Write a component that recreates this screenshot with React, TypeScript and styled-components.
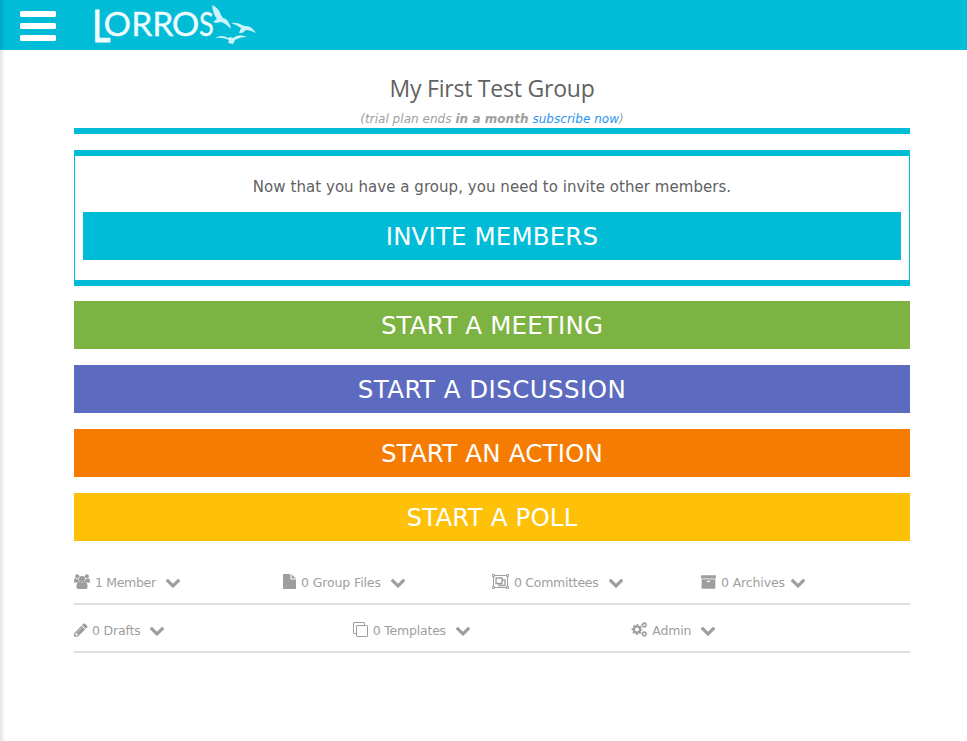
import React from "react";
import styled, { createGlobalStyle } from "styled-components";

const CYAN = "#00bcd7";

const GlobalStyle = createGlobalStyle`
  *, *::before, *::after { box-sizing: border-box; }
  html, body { margin: 0; padding: 0; background: #fff; overflow: hidden; }
  body { font-family: Verdana, "DejaVu Sans", sans-serif; color: #616161; }
`;

const Page = styled.div`
  position: relative;
  width: 967px;
  height: 741px;
  overflow: hidden;
`;

const EdgeShadow = styled.div`
  position: absolute;
  inset: 0 auto 0 0;
  width: 5px;
  background: linear-gradient(to right, rgba(0, 0, 0, 0.11), rgba(0, 0, 0, 0));
`;

const TopBar = styled.header`
  display: flex;
  align-items: flex-start;
  height: 50px;
  padding-left: 20px;
  background: ${CYAN};
`;

const MenuButton = styled.button`
  display: flex;
  flex-direction: column;
  gap: 6px;
  width: 36px;
  margin: 11px 34px 0 0;
  padding: 0;
  border: 0;
  background: none;
`;

const MenuBar = styled.span`
  height: 6px;
  border-radius: 1.5px;
  background: #fff;
`;

const Main = styled.main`
  width: 836px;
  margin-left: 74px;
`;

const Heading = styled.div`
  height: 84px;
  padding-top: 22px;
  border-bottom: 6px solid ${CYAN};
  text-align: center;
`;

const Title = styled.h1`
  margin: 0;
  font: 400 23px/32px "Segoe UI", "Open Sans", sans-serif;
  letter-spacing: -0.22px;
`;

const PlanNote = styled.p`
  margin: 7px 0 0;
  font-size: 12px;
  line-height: 16px;
  font-style: italic;
  letter-spacing: 0.04px;
  color: #9e9e9e;
`;

const PlanLink = styled.a`
  color: #2a93f0;
`;

const InvitePanel = styled.section`
  height: 136px;
  margin: 16px 0 15px;
  padding: 21px 8px 0;
  border: solid ${CYAN};
  border-width: 6px 1px;
  text-align: center;
`;

const InviteText = styled.p`
  margin: 0 0 14px;
  font-size: 15px;
  line-height: 21px;
  letter-spacing: 0.05px;
`;

const ActionButton = styled.button<{ $color: string; $spacing: number }>`
  display: block;
  width: 100%;
  height: 48px;
  padding: 0;
  border: 0;
  background: ${(p) => p.$color};
  color: #fff;
  font: 400 24.5px/48px Verdana, "DejaVu Sans", sans-serif;
  letter-spacing: ${(p) => p.$spacing}px;
`;

const ActionLabel = styled.span`
  display: block;
  padding-top: 1px;
  line-height: 47px;
`;

const ActionList = styled.div`
  display: grid;
  gap: 16px;
`;

const SectionRow = styled.nav<{ $columns: number }>`
  display: grid;
  grid-template-columns: repeat(${(p) => p.$columns}, 1fr);
  height: 48px;
  padding-top: 13px;
  border-bottom: 2px solid #e0e0e0;
`;

const Sections = styled.div`
  margin-top: 16px;
`;

const SectionLink = styled.a`
  display: flex;
  align-items: center;
  height: 24px;
  font-size: 12.5px;
  color: #9e9e9e;
`;

const IconSlot = styled.span<{ $width: number }>`
  display: flex;
  flex: none;
  width: ${(p) => p.$width}px;
  height: 16px;
`;

const ChevronSlot = styled.span`
  display: flex;
  padding-bottom: 1px;
`;

const SectionLabel = styled.span<{ $width: number; $spacing: number }>`
  flex: none;
  width: ${(p) => p.$width}px;
  padding-top: 2px;
  white-space: nowrap;
  line-height: 24px;
  letter-spacing: ${(p) => p.$spacing}px;
`;

const Glyph = ({ d, left = 0 }: { d: string; left?: number }) => (
  <svg width="16" height="16" viewBox={`${left} 0 1792 1792`} fill="#9e9e9e">
    <path d={d} />
  </svg>
);

const CHEVRON =
  "M1683 808l-742 741q-19 19-45 19t-45-19l-742-741q-19-19-19-45.5t19-45.5l166-165q19-19 45-19t45 19l531 531 531-531q19-19 45-19t45 19l166 165q19 19 19 45.5t-19 45.5z";
const PENCIL =
  "M491 1536l91-91-235-235-91 91v107h128v128h107zm523-928q0-22-22-22-10 0-17 7l-542 542q-7 7-7 17 0 22 22 22 10 0 17-7l542-542q7-7 7-17zm-54-192l416 416-832 832h-416v-416zm683 96q0 53-37 90l-166 166-416-416 166-165q36-38 90-38 53 0 91 38l235 234q37 39 37 91z";
const ARCHIVE =
  "M1088 832q0-26-19-45t-45-19h-256q-26 0-45 19t-19 45 19 45 45 19h256q26 0 45-19t19-45zm576-192v960q0 26-19 45t-45 19h-1408q-26 0-45-19t-19-45v-960q0-26 19-45t45-19h1408q26 0 45 19t19 45zm64-448v256q0 26-19 45t-45 19h-1536q-26 0-45-19t-19-45v-256q0-26 19-45t45-19h1536q26 0 45 19t19 45z";

const UsersIcon = () => (
  <svg width="16" height="16" viewBox="0 0 16 16" fill="#9e9e9e">
    <circle cx="3.2" cy="2.3" r="2.1" />
    <circle cx="12.8" cy="2.3" r="2.1" />
    <circle cx="8" cy="5" r="3.1" />
    <path d="M1.6 4.3Q3.2 5.5 4.5 4.7Q4.3 6.7 5.5 8H4Q3 8 2.4 8.8H1.5Q0 8.8 0 7.5Q0 4.3 1.6 4.3Z" />
    <path d="M14.4 4.3Q12.8 5.5 11.5 4.7Q11.7 6.7 10.5 8H12Q13 8 13.6 8.8H14.5Q16 8.8 16 7.5Q16 4.3 14.4 4.3Z" />
    <path d="M5.2 7.6Q8 9.2 10.8 7.6Q13.6 8.2 13.6 13Q13.6 15 11.8 15H4.2Q2.4 15 2.4 13Q2.4 8.2 5.2 7.6Z" />
  </svg>
);

const FileIcon = () => (
  <svg width="13" height="16" viewBox="0 0 13 16" fill="#9e9e9e">
    <path d="M.7 0H7.4V4.7Q7.4 5.5 8.2 5.5H13V14.2Q13 15 12.3 15H.7Q0 15 0 14.2V.7Q0 0 .7 0Z" />
    <path d="M8.5.2L12.8 4.5H8.5Z" />
  </svg>
);

const ObjectGroupIcon = () => (
  <svg width="18" height="16" viewBox="0 0 18 16" fill="none" stroke="#9e9e9e">
    <path d="M3 1.5H15M3 13.5H15M1.5 3V12M15.5 3V12" />
    <path d="M.5.5H2.5V2.5H.5ZM14.5.5H16.5V2.5H14.5ZM.5 12.5H2.5V14.5H.5ZM14.5 12.5H16.5V14.5H14.5Z" />
    <path strokeWidth="1.3" d="M4 4H10V9.5H4ZM10 6H13V11.5H7V9.5" />
  </svg>
);

const CloneIcon = () => (
  <svg width="16" height="16" viewBox="0 0 16 16" fill="none" stroke="#9e9e9e">
    <path d="M3.5 11.5H1Q.5 11.5.5 11V1Q.5.5 1 .5H11Q11.5.5 11.5 1V3.5" />
    <rect x="3.5" y="3.5" width="11" height="11" rx=".6" />
  </svg>
);

const CogsIcon = () => (
  <svg width="17" height="16" viewBox="0 0 17 16" fill="none" stroke="#9e9e9e">
    <circle cx="6" cy="7.5" r="3.2" strokeWidth="2.3" />
    <circle cx="6" cy="7.5" r="4.7" strokeWidth="1.4" strokeDasharray="2 1.69" strokeDashoffset="1" />
    <circle cx="13.3" cy="3" r="1.7" strokeWidth="1.4" />
    <circle cx="13.3" cy="3" r="2.6" strokeWidth="1" strokeDasharray="1.3 1.42" strokeDashoffset=".65" />
    <circle cx="13.3" cy="12" r="1.7" strokeWidth="1.4" />
    <circle cx="13.3" cy="12" r="2.6" strokeWidth="1" strokeDasharray="1.3 1.42" strokeDashoffset=".65" />
  </svg>
);

const LogoText = styled.text<{ $stroke?: number }>`
  font-family: Lato, "Liberation Sans", sans-serif;
  fill: #effcff;
  stroke: #effcff;
  stroke-width: ${(p) => p.$stroke ?? 0.3}px;
`;

const Logo = () => (
  <svg width="170" height="50" viewBox="90 0 170 50" overflow="visible" aria-label="Lorros">
    <LogoText transform="translate(92.2 41.6) scale(.78 1)" fontSize="45" $stroke={1}>L</LogoText>
    <LogoText transform="translate(103.4 35.6) scale(1.06 1)" fontSize="32.5">O</LogoText>
    <LogoText transform="translate(131.2 35.6) scale(1.04 1)" fontSize="32.5">R</LogoText>
    <LogoText transform="translate(152.2 35.6) scale(1.04 1)" fontSize="32.5">R</LogoText>
    <LogoText transform="translate(171.8 35.6) scale(1.06 1)" fontSize="32.5">O</LogoText>
    <LogoText transform="translate(199 35.6) scale(.84 1)" fontSize="32.5">S</LogoText>
    <g fill="#c9f4fb">
      <path d="M212 5Q219 8 221 15L223 18Q229 19 231 29Q225 23 221 22L216 23L213 22L217 19Q213 14 212 5Z" />
      <path d="M231 23Q237 22 242 25L245 26Q251 25 256 33Q250 30 246 30L242 33L239 33L241 28Q237 25 231 23Z" />
      <path d="M215 38Q222 34 228 38L230 37L233 38Q239 33 247 37Q240 37 235 40L233 44L228 43L229 40Q223 37 215 38Z" />
    </g>
  </svg>
);

type Section = {
  label: string;
  icon: React.ReactNode;
  iconWidth: number;
  labelWidth: number;
  spacing: number;
};

const firstRow: Section[] = [
  { label: "1 Member", icon: <UsersIcon />, iconWidth: 21, labelWidth: 70, spacing: -0.33 },
  { label: "0 Group Files", icon: <FileIcon />, iconWidth: 18, labelWidth: 89, spacing: -0.12 },
  { label: "0 Committees", icon: <ObjectGroupIcon />, iconWidth: 22, labelWidth: 94, spacing: -0.28 },
  { label: "0 Archives", icon: <Glyph d={ARCHIVE} left={60} />, iconWidth: 20, labelWidth: 69, spacing: -0.13 },
];

const secondRow: Section[] = [
  { label: "0 Drafts", icon: <Glyph d={PENCIL} left={128} />, iconWidth: 18, labelWidth: 57, spacing: -0.17 },
  { label: "0 Templates", icon: <CloneIcon />, iconWidth: 20, labelWidth: 82, spacing: -0.2 },
  { label: "Admin", icon: <CogsIcon />, iconWidth: 21, labelWidth: 48, spacing: -0.2 },
];

const actions = [
  { label: "START A MEETING", color: "#7cb342", spacing: 0.18 },
  { label: "START A DISCUSSION", color: "#5c6bc0", spacing: 0.45 },
  { label: "START AN ACTION", color: "#f57c00", spacing: 0.18 },
  { label: "START A POLL", color: "#ffc107", spacing: 0.13 },
];

const Row = ({ sections }: { sections: Section[] }) => (
  <SectionRow $columns={sections.length}>
    {sections.map((s) => (
      <SectionLink key={s.label}>
        <IconSlot $width={s.iconWidth}>{s.icon}</IconSlot>
        <SectionLabel $width={s.labelWidth} $spacing={s.spacing}>
          {s.label}
        </SectionLabel>
        <ChevronSlot>
          <Glyph d={CHEVRON} />
        </ChevronSlot>
      </SectionLink>
    ))}
  </SectionRow>
);

export default function App() {
  return (
    <Page>
      <GlobalStyle />
      <TopBar>
        <MenuButton aria-label="Menu">
          <MenuBar />
          <MenuBar />
          <MenuBar />
        </MenuButton>
        <Logo />
      </TopBar>
      <Main>
        <Heading>
          <Title>My First Test Group</Title>
          <PlanNote>
            (trial plan ends <b>in a month</b> <PlanLink>subscribe now</PlanLink>)
          </PlanNote>
        </Heading>
        <InvitePanel>
          <InviteText>Now that you have a group, you need to invite other members.</InviteText>
          <ActionButton $color={CYAN} $spacing={0.15}>
            <ActionLabel>INVITE MEMBERS</ActionLabel>
          </ActionButton>
        </InvitePanel>
        <ActionList>
          {actions.map((a) => (
            <ActionButton key={a.label} $color={a.color} $spacing={a.spacing}>
              <ActionLabel>{a.label}</ActionLabel>
            </ActionButton>
          ))}
        </ActionList>
        <Sections>
          <Row sections={firstRow} />
          <Row sections={secondRow} />
        </Sections>
      </Main>
      <EdgeShadow />
    </Page>
  );
}
